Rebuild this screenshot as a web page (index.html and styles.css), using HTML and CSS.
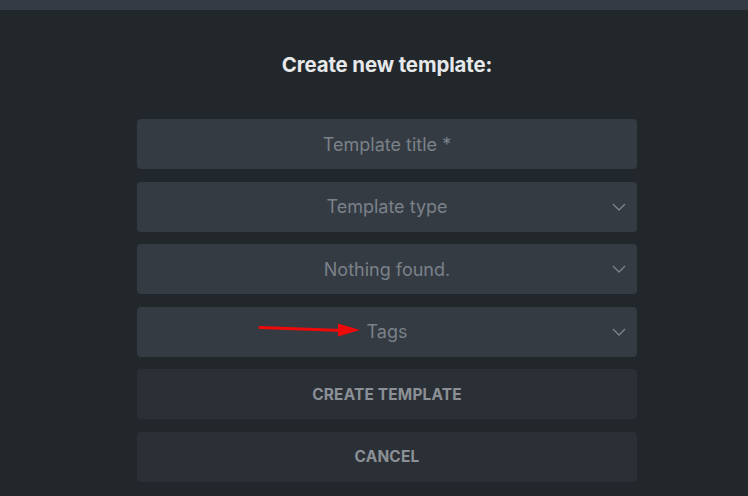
FILE: index.html
```html
<!DOCTYPE html>
<html>
<head>
<meta charset="utf-8">
<link rel="stylesheet" href="styles.css">
</head>
<body>
<div class="topbar"></div>
<main class="page">
  <h1 class="title">Create new template:</h1>
  <form class="form">
    <div class="field"><span class="ph">Template title *</span></div>
    <div class="field select"><span class="ph">Template type</span><svg class="chev" viewBox="0 0 14 8" width="14" height="8"><path d="M1 1l6 6 6-6" fill="none" stroke="#7d838a" stroke-width="1.3"/></svg></div>
    <div class="field select"><span class="ph">Nothing found.</span><svg class="chev" viewBox="0 0 14 8" width="14" height="8"><path d="M1 1l6 6 6-6" fill="none" stroke="#7d838a" stroke-width="1.3"/></svg></div>
    <div class="field select"><span class="ph">Tags</span><svg class="chev" viewBox="0 0 14 8" width="14" height="8"><path d="M1 1l6 6 6-6" fill="none" stroke="#7d838a" stroke-width="1.3"/></svg>
      <svg class="arrow" viewBox="0 0 104 16" width="104" height="16"><path d="M2 5.5 L84 8.5" stroke="#ee0a0a" stroke-width="3.2" stroke-linecap="round"/><path d="M80 1.5 L102 8 L80 14.5 Z" fill="#ee0a0a"/></svg>
    </div>
    <div class="btn">CREATE TEMPLATE</div>
    <div class="btn">CANCEL</div>
  </form>
</main>
</body>
</html>
```

FILE: styles.css
```css
html, body {
  margin: 0;
  padding: 0;
  background: #22272b;
  height: 100%;
  overflow: hidden;
}
body {
  font-family: Inter, "Noto Sans", sans-serif;
}
.topbar {
  height: 10px;
  background: #343b45;
}
.page {
  display: flex;
  flex-direction: column;
  align-items: center;
  padding-top: 43px;
  padding-left: 26px;
}
.title {
  margin: 0;
  font-size: 20.4px;
  line-height: 24px;
  font-weight: 700;
  color: #e6e8ea;
  letter-spacing: -0.1px;
}
.form {
  margin-top: 42px;
  width: 500px;
  display: flex;
  flex-direction: column;
  gap: 12.5px;
}
.field {
  position: relative;
  height: 50px;
  border-radius: 4px;
  background: #343b43;
  display: flex;
  align-items: center;
  justify-content: center;
}
.ph {
  font-size: 18px;
  color: #7b8189;
}
.chev {
  position: absolute;
  right: 11px;
  top: 21px;
}
.arrow {
  position: absolute;
  left: 121px;
  top: 15px;
}
.btn {
  height: 50px;
  border-radius: 4px;
  background: #2b3036;
  display: flex;
  align-items: center;
  justify-content: center;
  font-size: 15.4px;
  font-weight: 700;
  color: #8b9096;
  letter-spacing: 0.2px;
}
```
